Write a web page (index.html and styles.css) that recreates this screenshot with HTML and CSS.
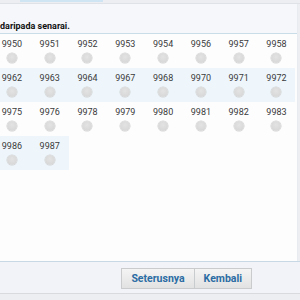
FILE: index.html
```html
<!DOCTYPE html>
<html lang="ms">
<head>
    <meta charset="UTF-8">
    <meta name="viewport" content="width=device-width, initial-scale=1.0">
    <title>Pilih nombor</title>
    <link rel="stylesheet" href="styles.css">
</head>
<body>
    <div class="tabs">
        <div class="tab-active"></div>
    </div>
    <div class="panel">
        <div class="panel-head">daripada senarai.</div>
        <div class="grid">
            <div class="row">
                <label class="cell"><span>9950</span><i class="dot"></i></label>
                <label class="cell"><span>9951</span><i class="dot"></i></label>
                <label class="cell"><span>9952</span><i class="dot"></i></label>
                <label class="cell"><span>9953</span><i class="dot"></i></label>
                <label class="cell"><span>9954</span><i class="dot"></i></label>
                <label class="cell"><span>9956</span><i class="dot"></i></label>
                <label class="cell"><span>9957</span><i class="dot"></i></label>
                <label class="cell"><span>9958</span><i class="dot"></i></label>
            </div>
            <div class="row alt">
                <label class="cell"><span>9962</span><i class="dot"></i></label>
                <label class="cell"><span>9963</span><i class="dot"></i></label>
                <label class="cell"><span>9964</span><i class="dot"></i></label>
                <label class="cell"><span>9967</span><i class="dot"></i></label>
                <label class="cell"><span>9968</span><i class="dot"></i></label>
                <label class="cell"><span>9970</span><i class="dot"></i></label>
                <label class="cell"><span>9971</span><i class="dot"></i></label>
                <label class="cell"><span>9972</span><i class="dot"></i></label>
            </div>
            <div class="row">
                <label class="cell"><span>9975</span><i class="dot"></i></label>
                <label class="cell"><span>9976</span><i class="dot"></i></label>
                <label class="cell"><span>9978</span><i class="dot"></i></label>
                <label class="cell"><span>9979</span><i class="dot"></i></label>
                <label class="cell"><span>9980</span><i class="dot"></i></label>
                <label class="cell"><span>9981</span><i class="dot"></i></label>
                <label class="cell"><span>9982</span><i class="dot"></i></label>
                <label class="cell"><span>9983</span><i class="dot"></i></label>
            </div>
            <div class="row alt">
                <label class="cell"><span>9986</span><i class="dot"></i></label>
                <label class="cell"><span>9987</span><i class="dot"></i></label>
            </div>
        </div>
    </div>
    <div class="footer">
        <button class="btn">Seterusnya</button>
        <button class="btn">Kembali</button>
    </div>
</body>
</html>
```

FILE: styles.css
```css
html, body {
    margin: 0;
    width: 300px;
    height: 300px;
    overflow: hidden;
    background: #eceef2;
    font-family: Roboto, "Liberation Sans", sans-serif;
}
.tabs {
    height: 3px;
    background: #eceef1;
    border-bottom: 1px solid #dfe3e8;
}
.tab-active {
    margin-left: 20px;
    width: 83px;
    height: 2px;
    background: #cfe5f4;
}
.panel {
    margin-left: -7px;
    width: 304px;
    height: 257px;
    background: #fdfdfe;
    border-right: 1px solid #e8ecf0;
    display: flex;
    flex-direction: column;
}
.panel-head {
    height: 30px;
    box-sizing: border-box;
    padding: 0 0 1px 7px;
    background: #f5f7fb;
    border-bottom: 1px solid #c9dde9;
    display: flex;
    align-items: flex-end;
    font-size: 9px;
    font-weight: bold;
    line-height: 12px;
    color: #111;
}
.row {
    display: flex;
}
.cell {
    width: 37.8px;
    height: 34px;
    padding-top: 5px;
    box-sizing: border-box;
    display: flex;
    flex-direction: column;
    align-items: center;
    font-size: 9px;
    line-height: 10px;
    color: #3a3a3a;
}
.alt .cell {
    background: #eef6fc;
}
.dot {
    width: 10px;
    height: 10px;
    margin-top: 4px;
    border-radius: 50%;
    background: radial-gradient(circle at 50% 40%, #e3e3e3, #d3d3d3);
    box-shadow: 0 0 0 0.5px #cfcfcf;
}
.footer {
    height: 33px;
    box-sizing: border-box;
    border-top: 1px solid #c8d8e4;
    border-bottom: 1px solid #d9dade;
    background: #f1f3f8;
    display: flex;
    justify-content: flex-end;
    align-items: flex-start;
    padding: 6px 48px 0 0;
}
.btn {
    height: 21px;
    padding: 0 9px;
    border: 1px solid #cacbcd;
    background: linear-gradient(#f4f4f4, #e2e2e2);
    color: #2a6ca3;
    font-family: Roboto, "Liberation Sans", sans-serif;
    font-size: 10.5px;
    font-weight: bold;
    cursor: pointer;
}
.btn + .btn {
    border-left: none;
}
```
